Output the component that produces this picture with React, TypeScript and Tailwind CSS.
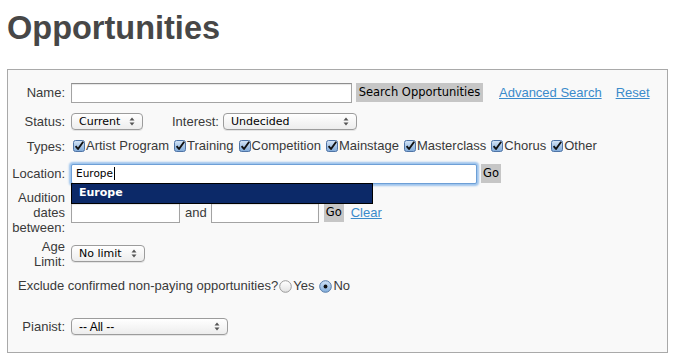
import React from 'react'

const Arrows = () => (
  <svg width="6" height="9" viewBox="0 0 6 9" className="shrink-0">
    <path d="M3 0.5 L5.5 3.5 L0.5 3.5 Z" fill="#555" />
    <path d="M3 8.5 L5.5 5.5 L0.5 5.5 Z" fill="#555" />
  </svg>
)

const Select = ({ value, width, arial }: { value: string; width: string; arial?: boolean }) => (
  <div
    className={`flex h-[17px] items-center justify-between rounded-[4px] border border-[#9c9c9c] bg-gradient-to-b from-white to-[#ededed] pl-[7px] pr-[7px] text-black shadow-[0_1px_0_#e4e4e4] ${width} ${
      arial ? "font-['Liberation_Sans',sans-serif] text-[12px]" : "font-['DejaVu_Sans',sans-serif] text-[11px]"
    }`}
  >
    <span className="leading-none">{value}</span>
    <Arrows />
  </div>
)

const Check = () => (
  <svg width="12" height="12" viewBox="0 0 12 12" className="mr-px shrink-0">
    <defs>
      <linearGradient id="cb" x1="0" y1="0" x2="0" y2="1">
        <stop offset="0" stopColor="#d6e6f7" />
        <stop offset="1" stopColor="#7fa9d8" />
      </linearGradient>
    </defs>
    <rect x="0.5" y="0.5" width="11" height="11" rx="2" fill="url(#cb)" stroke="#4f74a6" />
    <path d="M2.6 6.2 L5 9 L10.2 1.8" fill="none" stroke="#111" strokeWidth="1.9" strokeLinejoin="round" />
  </svg>
)

const Radio = ({ on }: { on?: boolean }) => (
  <svg width="13" height="13" viewBox="0 0 13 13" className="mx-px shrink-0">
    <defs>
      <linearGradient id="rw" x1="0" y1="0" x2="0" y2="1">
        <stop offset="0" stopColor="#ffffff" />
        <stop offset="1" stopColor="#e2e2e2" />
      </linearGradient>
      <linearGradient id="rb" x1="0" y1="0" x2="0" y2="1">
        <stop offset="0" stopColor="#cfe2f6" />
        <stop offset="1" stopColor="#82addb" />
      </linearGradient>
    </defs>
    <circle cx="6.5" cy="6.5" r="5.8" fill={on ? 'url(#rb)' : 'url(#rw)'} stroke={on ? '#557aa8' : '#9a9a9a'} />
    {on && <circle cx="6.5" cy="6.5" r="1.9" fill="#111" />}
  </svg>
)

const Input = ({ width }: { width: string }) => (
  <div className={`h-[20px] border border-[#a3a3a3] border-t-[#8e8e8e] bg-white shadow-[inset_0_1px_1px_#e6e6e6] ${width}`} />
)

const GrayButton = ({ label, width }: { label: string; width: string }) => (
  <div
    className={`flex h-[19px] items-center justify-center bg-[#c6c6c6] font-['DejaVu_Sans',sans-serif] text-[11.5px] text-black ${width}`}
  >
    {label}
  </div>
)

const Label = ({ children }: { children: React.ReactNode }) => (
  <div className="w-[58px] shrink-0 pr-px text-right leading-[15px]">{children}</div>
)

const types = ['Artist Program', 'Training', 'Competition', 'Mainstage', 'Masterclass', 'Chorus', 'Other']

export default function App() {
  return (
    <div className="h-[364px] w-[676px] bg-white px-[7px] pt-[10px] font-['Liberation_Sans',Arial,sans-serif] text-[13px] text-[#3a3a3a]">
      <h1 className="text-[32.5px] font-bold leading-[37px] text-[#474747]">Opportunities</h1>

      <div className="relative mt-[22px] w-[661px] border border-[#a9a9a9] bg-[#f9f9f9] pb-[17px] pt-[13px]">
        {/* name */}
        <div className="flex h-[19px] items-center gap-[5px]">
          <Label>Name:</Label>
          <Input width="w-[281px]" />
          <GrayButton label="Search Opportunities" width="ml-[-1px] w-[127px]" />
          <a className="ml-[11px] text-[#3b8bcb] underline">Advanced Search</a>
          <a className="ml-[9px] text-[#3b8bcb] underline">Reset</a>
        </div>

        {/* status / interest */}
        <div className="mt-[11px] flex h-[17px] items-center gap-[5px]">
          <Label>Status:</Label>
          <Select value="Current" width="w-[72px]" />
          <span className="ml-[24px]">Interest:</span>
          <Select value="Undecided" width="ml-[-1px] w-[134px]" />
        </div>

        {/* types */}
        <div className="mt-[8px] flex h-[16px] items-center gap-[5px]">
          <Label>Types:</Label>
          <div className="ml-[2px] flex items-center gap-[5px]">
            {types.map((t) => (
              <div key={t} className="flex items-center">
                <Check />
                <span>{t}</span>
              </div>
            ))}
          </div>
        </div>

        {/* location */}
        <div className="relative mt-[10px] flex h-[19px] items-center gap-[5px]">
          <Label>Location:</Label>
          <div className="flex h-[20px] w-[406px] items-center rounded-[2px] border border-[#6d9fd6] bg-white pl-[4px] font-['DejaVu_Sans',sans-serif] text-[10.5px] text-black shadow-[0_0_2px_2px_#9cc3ec]">
            Europe
            <span className="ml-px h-[13px] w-px bg-black" />
          </div>
          <GrayButton label="Go" width="ml-[-1px] w-[20px]" />

          <div className="absolute left-[63px] top-[19px] z-10 flex h-[21px] w-[302px] items-center border border-black bg-[#0c2968] pl-[7px] font-['DejaVu_Sans',sans-serif] text-[11px] font-bold text-white">
            Europe
          </div>
        </div>

        {/* audition dates */}
        <div className="mt-[7px] flex h-[45px] items-center gap-[5px]">
          <Label>
            Audition
            <br />
            dates
            <br />
            between:
          </Label>
          <Input width="w-[109px]" />
          <span>and</span>
          <Input width="ml-[-1px] w-[108px]" />
          <GrayButton label="Go" width="w-[20px]" />
          <a className="ml-[2px] text-[#3b8bcb] underline">Clear</a>
        </div>

        {/* age */}
        <div className="mt-[3px] flex h-[31px] items-center gap-[5px]">
          <Label>
            Age
            <br />
            Limit:
          </Label>
          <Select value="No limit" width="w-[74px]" />
        </div>

        {/* exclude */}
        <div className="mt-[9px] flex h-[16px] items-center pl-[10px]">
          <span>Exclude confirmed non-paying opportunities?</span>
          <Radio />
          <span>Yes</span>
          <span className="w-[4px]" />
          <Radio on />
          <span>No</span>
        </div>

        {/* pianist */}
        <div className="mt-[24px] flex h-[17px] items-center gap-[5px]">
          <Label>Pianist:</Label>
          <Select value="-- All --" width="w-[157px]" arial />
        </div>
      </div>
    </div>
  )
}
